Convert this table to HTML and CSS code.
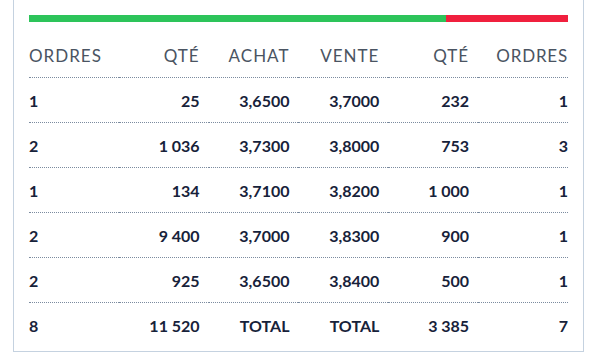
FILE: index.html
```html
<!DOCTYPE html>
<html lang="fr">
<head>
<meta charset="utf-8">
<link rel="stylesheet" href="styles.css">
</head>
<body>
<div class="panel">
  <div class="ratio">
    <div class="buy" style="width:77.29%"></div>
    <div class="sell"></div>
  </div>
  <table class="book">
    <thead>
      <tr><th class="l">ORDRES</th><th>QTÉ</th><th>ACHAT</th><th>VENTE</th><th>QTÉ</th><th>ORDRES</th></tr>
    </thead>
    <tbody>
      <tr><td class="l">1</td><td>25</td><td>3,6500</td><td>3,7000</td><td>232</td><td>1</td></tr>
      <tr><td class="l">2</td><td>1 036</td><td>3,7300</td><td>3,8000</td><td>753</td><td>3</td></tr>
      <tr><td class="l">1</td><td>134</td><td>3,7100</td><td>3,8200</td><td>1 000</td><td>1</td></tr>
      <tr><td class="l">2</td><td>9 400</td><td>3,7000</td><td>3,8300</td><td>900</td><td>1</td></tr>
      <tr><td class="l">2</td><td>925</td><td>3,6500</td><td>3,8400</td><td>500</td><td>1</td></tr>
      <tr class="total"><td class="l">8</td><td>11 520</td><td>TOTAL</td><td>TOTAL</td><td>3 385</td><td>7</td></tr>
    </tbody>
  </table>
</div>
</body>
</html>
```
FILE: styles.css
```css
html, body {
  margin: 0;
  padding: 0;
  background: #ffffff;
}
body {
  font-family: "Lato", "Open Sans", sans-serif;
}
.panel {
  margin-left: 13px;
  width: 539px;
  padding: 15px 15px 4px 15px;
  border: 1px solid #c5d2e0;
  border-top: none;
}
.ratio {
  display: flex;
  height: 7px;
  margin-bottom: 11px;
}
.buy { background: #2dc45a; }
.sell { flex: 1; background: #f0203e; }
.book {
  width: 100%;
  border-collapse: collapse;
  table-layout: fixed;
}
.book th, .book td {
  height: 44px;
  padding: 0 9px 0 0;
  text-align: right;
  border-bottom: 1px dotted #7b8b9f;
  vertical-align: middle;
}
.book th:last-child, .book td:last-child { padding-right: 0; }
.book th {
  font-size: 17px;
  font-weight: 400;
  color: #4a5462;
  letter-spacing: 1px;
}
.book th:last-child { letter-spacing: 0.8px; }
.book td {
  font-size: 16px;
  font-weight: 700;
  color: #17223a;
}
.book .l { text-align: left; }
.book tr.total td { border-bottom: none; }
```
